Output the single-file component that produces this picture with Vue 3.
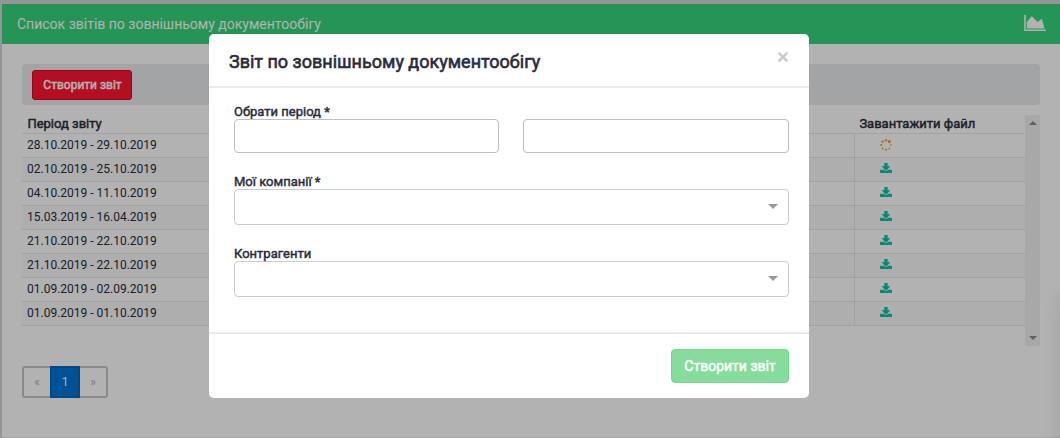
<script setup>
const rows = [
  { period: '28.10.2019 - 29.10.2019', ready: false },
  { period: '02.10.2019 - 25.10.2019', ready: true },
  { period: '04.10.2019 - 11.10.2019', ready: true },
  { period: '15.03.2019 - 16.04.2019', ready: true },
  { period: '21.10.2019 - 22.10.2019', ready: true },
  { period: '21.10.2019 - 22.10.2019', ready: true },
  { period: '01.09.2019 - 02.09.2019', ready: true },
  { period: '01.09.2019 - 01.10.2019', ready: true }
]
</script>

<template>
  <div class="app">
    <main class="page">
      <header class="bar">
        <span>Список звітів по зовнішньому документообігу</span>
        <svg class="chart" viewBox="0 128 2048 1536"><path d="M2048 1536v128h-2048v-1536h128v1408h1920zm-384-1024l256 896h-1664v-576l448-576 576 576z" /></svg>
      </header>
      <div class="content">
        <div class="toolbar"><button class="create strong">Створити звіт</button></div>
        <div class="grid">
          <div class="table">
            <div class="row head strong"><div>Період звіту</div><div>Завантажити файл</div></div>
            <div v-for="(row, i) in rows" :key="i" class="row item">
              <div>{{ row.period }}</div>
              <div class="file">
                <svg v-if="row.ready" class="download" viewBox="64 64 1664 1472"><path d="M1344 1344q0-26-19-45t-45-19-45 19-19 45 19 45 45 19 45-19 19-45zm256 0q0-26-19-45t-45-19-45 19-19 45 19 45 45 19 45-19 19-45zm128-224v320q0 40-28 68t-68 28h-1472q-40 0-68-28t-28-68v-320q0-40 28-68t68-28h465l135 136q58 56 136 56t136-56l136-136h464q40 0 68 28t28 68zm-325-569q17 41-14 70l-448 448q-18 19-45 19t-45-19l-448-448q-31-29-14-70 17-39 59-39h256v-448q0-26 19-45t45-19h256q26 0 45 19t19 45v448h256q42 0 59 39z" /></svg>
                <svg v-else class="spinner" viewBox="0 0 12 12">
                  <circle cx="6" cy="1.3" r="1.2" /><circle cx="9.4" cy="2.6" r="1.6" />
                  <circle cx="10.9" cy="6" r=".85" /><circle cx="9.4" cy="9.4" r=".9" />
                  <circle cx="6" cy="10.8" r="1" /><circle cx="2.6" cy="9.4" r="1" />
                  <circle cx="1.2" cy="6" r="1.1" /><circle cx="2.6" cy="2.6" r="1.2" />
                </svg>
              </div>
            </div>
          </div>
          <div class="scroll"><i class="up"></i><i class="down"></i></div>
        </div>
        <nav class="pager"><span>«</span><b>1</b><span>»</span></nav>
      </div>
    </main>
    <div class="edge-shadow"></div>
    <div class="backdrop">
      <section class="modal">
        <div class="modal-head">
          <h1 class="strong">Звіт по зовнішньому документообігу</h1>
          <svg class="close" viewBox="0 0 12 12"><path d="M1.6 1.6 10.4 10.4M10.4 1.6 1.6 10.4" /></svg>
        </div>
        <div class="modal-body">
          <label class="strong">Обрати період *</label>
          <div class="dates"><div class="field"></div><div class="field"></div></div>
          <label class="strong">Мої компанії *</label>
          <div class="select"><i class="caret"></i></div>
          <label class="strong">Контрагенти</label>
          <div class="select"><i class="caret"></i></div>
        </div>
        <div class="modal-foot"><button class="submit strong">Створити звіт</button></div>
      </section>
    </div>
  </div>
</template>

<style>
html, body { margin: 0; overflow: hidden; }
</style>

<style scoped>
* { box-sizing: border-box; }
.app { position: relative; width: 1060px; height: 438px; overflow: hidden; padding: 4px 0 0 2px; background: #d6d5d9; font-family: Roboto, "Liberation Sans", sans-serif; font-size: 12px; color: #292b3c; }
.strong { font-weight: 400; -webkit-text-stroke: .45px currentColor; }
.page { height: 434px; background: #fff; border-bottom: 1px solid #e9e9e9; }
.bar { height: 40px; background: #36d57a; color: #fff; font-size: 14px; display: flex; align-items: center; justify-content: space-between; padding: 0 14px 0 15px; }
.chart { width: 22px; height: 16px; fill: #fff; stroke: #fff; stroke-width: 40; margin-top: -3px; }
.content { padding: 20px 20px 0; }
.toolbar { height: 41px; background: #e9ebed; border-radius: 4px; padding: 6px 10px; }
button { font-family: inherit; margin: 0; padding: 0; color: #fff; }
.create { display: block; width: 100px; height: 30px; padding-left: 1px; font-size: 12px; background: #ff1731; border: 1px solid #e3001d; border-radius: 3px; }
.grid { display: flex; height: 231px; margin-top: 10px; }
.table { flex: 1; }
.row { display: grid; grid-template-columns: 832px 1fr; }
.head { height: 19px; font-size: 13px; line-height: 17px; border-bottom: 1px solid #e9e9ea; }
.head > div { padding-left: 5.4px; }
.item { height: 24px; line-height: 22px; border-bottom: 1px solid #e9e9ea; }
.item:nth-child(odd) { background: #f9f9f9; }
.item > div { padding-left: 5px; }
.item > .file { border-left: 1px solid #e9e9ea; padding-left: 25px; display: flex; align-items: flex-start; }
.download { width: 12px; height: 10.7px; margin-top: 4.5px; fill: #00c5a9; stroke: #00c5a9; stroke-width: 50; }
.spinner { width: 12px; height: 12px; margin-top: 4.5px; fill: #f5a11c; }
.scroll { width: 15px; background: #f1f1f1; display: flex; flex-direction: column; justify-content: space-between; align-items: center; padding: 6px 0; }
.up, .down, .caret { width: 0; height: 0; border: 4px solid transparent; border-width: 0 4px 4px; border-bottom-color: #8b8b8b; }
.down { border-width: 4px 4px 0; border-top-color: #8b8b8b; }
.pager { display: flex; width: 86px; height: 32px; margin-top: 20px; border: 2px solid #c4c4c4; border-radius: 3px; color: #abb1b8; line-height: 28px; text-align: center; }
.pager span { width: 26px; }
.pager b { width: 30px; height: 32px; margin-top: -2px; background: #0275d8; border: 2px solid #0267bf; color: #fff; font-weight: 400; }
.edge-shadow { position: absolute; left: 1064px; top: 296px; width: 40px; height: 180px; box-shadow: 0 0 22px rgba(0,0,0,.14); }
.backdrop { position: absolute; inset: 0; background: rgba(0,0,0,.3); padding: 34px 0 0 209px; }
.modal { width: 600px; height: 364px; background: #fff; border-radius: 5px; display: flex; flex-direction: column; }
.modal-head { height: 54px; border-bottom: 2px solid #e9ecef; display: flex; justify-content: space-between; align-items: flex-start; padding: 17px 20px 0; }
h1 { margin: 0; font-size: 18px; line-height: 21px; }
.modal-head .strong { -webkit-text-stroke-width: .6px; }
.close { width: 12px; height: 12px; stroke: #ccc; stroke-width: 2.6; fill: none; }
.modal-body { flex: 1; padding: 17px 20px 0 25px; }
label { display: block; font-size: 13px; line-height: 14px; height: 14px; }
.dates { display: grid; grid-template-columns: 265px 266px; gap: 24px; margin-bottom: 22px; }
.field { height: 34px; border: 1px solid #b9bfc4; border-radius: 4px; }
.select { height: 36px; border: 1px solid #ccc; border-radius: 4px; margin-bottom: 22px; display: flex; align-items: center; justify-content: flex-end; padding-right: 10px; }
.caret { border-width: 5px 5px 0; border-top-color: #999; margin-top: -1px; }
.modal-foot { height: 66px; border-top: 2px solid #e9ecef; display: flex; justify-content: flex-end; padding: 15px 20px 0; }
.submit { width: 118px; height: 34px; font-size: 14px; background: #85dc9b; border: 1px solid #74d78d; border-radius: 4px; }
</style>
